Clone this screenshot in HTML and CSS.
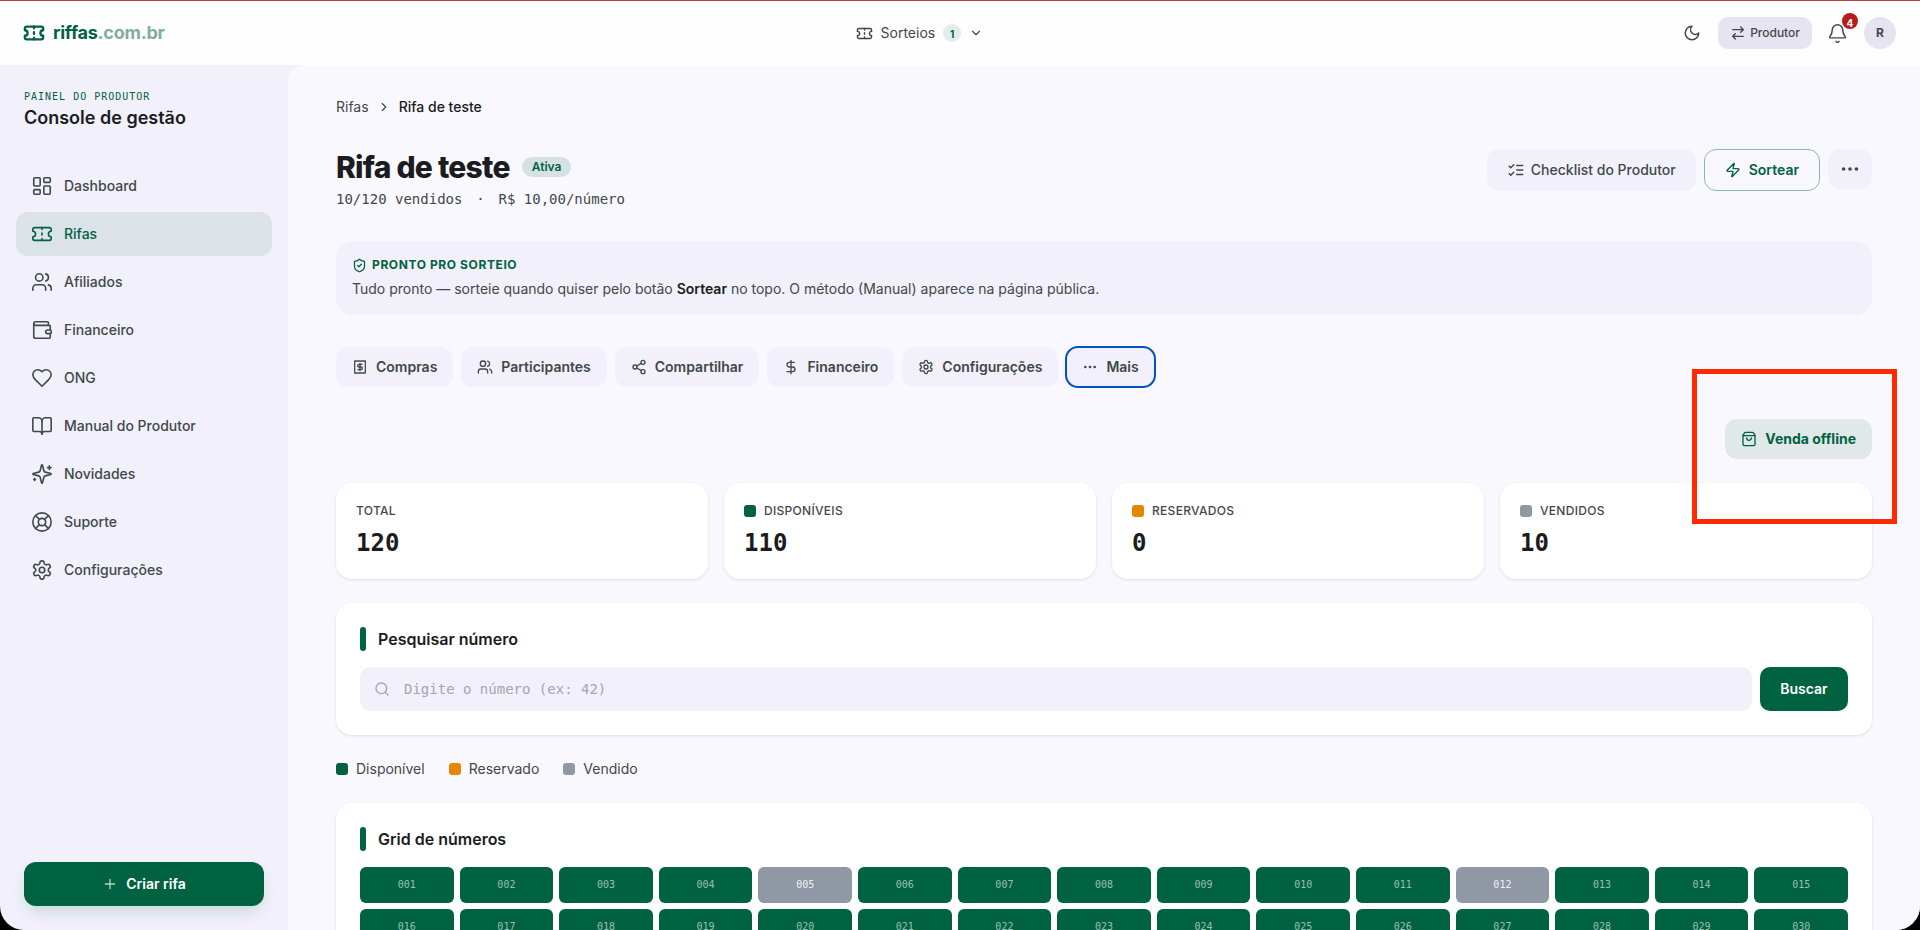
FILE: index.html
```html
<!DOCTYPE html>
<html lang="pt-BR">
<head>
<meta charset="utf-8">
<title>Rifa de teste</title>
<link rel="stylesheet" href="styles.css">
</head>
<body>
<svg class="defs" xmlns="http://www.w3.org/2000/svg">
  <symbol id="i-ticket" viewBox="0 0 24 24"><path d="M2 9a3 3 0 0 1 0 6v2a2 2 0 0 0 2 2h16a2 2 0 0 0 2-2v-2a3 3 0 0 1 0-6V7a2 2 0 0 0-2-2H4a2 2 0 0 0-2 2Z"/><path d="M12 5v2M12 11v2M12 17v2"/></symbol>
  <symbol id="i-dash" viewBox="0 0 24 24"><rect x="3" y="3" width="7" height="9" rx="1"/><rect x="14" y="3" width="7" height="5" rx="1"/><rect x="14" y="12" width="7" height="9" rx="1"/><rect x="3" y="16" width="7" height="5" rx="1"/></symbol>
  <symbol id="i-users" viewBox="0 0 24 24"><path d="M16 21v-2a4 4 0 0 0-4-4H6a4 4 0 0 0-4 4v2"/><circle cx="9" cy="7" r="4"/><path d="M22 21v-2a4 4 0 0 0-3-3.87"/><path d="M16 3.13a4 4 0 0 1 0 7.75"/></symbol>
  <symbol id="i-wallet" viewBox="0 0 24 24"><path d="M19 7V4a1 1 0 0 0-1-1H5a2 2 0 0 0 0 4h15a1 1 0 0 1 1 1v4h-3a2 2 0 0 0 0 4h3a1 1 0 0 0 1-1v-2a1 1 0 0 0-1-1"/><path d="M3 5v14a2 2 0 0 0 2 2h15a1 1 0 0 0 1-1v-4"/></symbol>
  <symbol id="i-heart" viewBox="0 0 24 24"><path d="M19 14c1.49-1.46 3-3.21 3-5.5A5.5 5.5 0 0 0 16.5 3c-1.76 0-3 .5-4.5 2-1.5-1.5-2.74-2-4.5-2A5.5 5.5 0 0 0 2 8.5c0 2.3 1.5 4.05 3 5.5l7 7Z"/></symbol>
  <symbol id="i-book" viewBox="0 0 24 24"><path d="M12 7v14"/><path d="M3 18a1 1 0 0 1-1-1V4a1 1 0 0 1 1-1h5a4 4 0 0 1 4 4 4 4 0 0 1 4-4h5a1 1 0 0 1 1 1v13a1 1 0 0 1-1 1h-6a3 3 0 0 0-3 3 3 3 0 0 0-3-3z"/></symbol>
  <symbol id="i-sparkles" viewBox="0 0 24 24"><path d="M9.937 15.5A2 2 0 0 0 8.5 14.063l-6.135-1.582a.5.5 0 0 1 0-.962L8.5 9.936A2 2 0 0 0 9.937 8.5l1.582-6.135a.5.5 0 0 1 .963 0L14.063 8.5A2 2 0 0 0 15.5 9.937l6.135 1.581a.5.5 0 0 1 0 .964L15.5 14.063a2 2 0 0 0-1.437 1.437l-1.582 6.135a.5.5 0 0 1-.963 0z"/><path d="M20 3v4M22 5h-4M4 17v2M5 18H3"/></symbol>
  <symbol id="i-buoy" viewBox="0 0 24 24"><circle cx="12" cy="12" r="10"/><path d="m4.93 4.93 4.24 4.24M14.83 9.17l4.24-4.24M14.83 14.83l4.24 4.24M9.17 14.83l-4.24 4.24"/><circle cx="12" cy="12" r="4"/></symbol>
  <symbol id="i-gear" viewBox="0 0 24 24"><path d="M12.22 2h-.44a2 2 0 0 0-2 2v.18a2 2 0 0 1-1 1.73l-.43.25a2 2 0 0 1-2 0l-.15-.08a2 2 0 0 0-2.73.73l-.22.38a2 2 0 0 0 .73 2.73l.15.1a2 2 0 0 1 1 1.72v.51a2 2 0 0 1-1 1.74l-.15.09a2 2 0 0 0-.73 2.73l.22.38a2 2 0 0 0 2.73.73l.15-.08a2 2 0 0 1 2 0l.43.25a2 2 0 0 1 1 1.73V20a2 2 0 0 0 2 2h.44a2 2 0 0 0 2-2v-.18a2 2 0 0 1 1-1.73l.43-.25a2 2 0 0 1 2 0l.15.08a2 2 0 0 0 2.73-.73l.22-.39a2 2 0 0 0-.73-2.73l-.15-.08a2 2 0 0 1-1-1.74v-.5a2 2 0 0 1 1-1.74l.15-.09a2 2 0 0 0 .73-2.73l-.22-.38a2 2 0 0 0-2.73-.73l-.15.08a2 2 0 0 1-2 0l-.43-.25a2 2 0 0 1-1-1.73V4a2 2 0 0 0-2-2z"/><circle cx="12" cy="12" r="3"/></symbol>
  <symbol id="i-moon" viewBox="0 0 24 24"><path d="M12 3a6 6 0 0 0 9 9 9 9 0 1 1-9-9Z"/></symbol>
  <symbol id="i-swap" viewBox="0 0 24 24"><path d="m16 3 4 4-4 4M20 7H4M8 21l-4-4 4-4M4 17h16"/></symbol>
  <symbol id="i-bell" viewBox="0 0 24 24"><path d="M10.268 21a2 2 0 0 0 3.464 0"/><path d="M3.262 15.326A1 1 0 0 0 4 17h16a1 1 0 0 0 .74-1.673C19.41 13.956 18 12.499 18 8A6 6 0 0 0 6 8c0 4.499-1.411 5.956-2.738 7.326"/></symbol>
  <symbol id="i-check" viewBox="0 0 24 24"><path d="m3 17 2 2 4-4M3 7l2 2 4-4M13 6h8M13 12h8M13 18h8"/></symbol>
  <symbol id="i-zap" viewBox="0 0 24 24"><path d="M4 14a1 1 0 0 1-.78-1.63l9.9-10.2a.5.5 0 0 1 .86.46l-1.92 6.02A1 1 0 0 0 13 10h7a1 1 0 0 1 .78 1.63l-9.9 10.2a.5.5 0 0 1-.86-.46l1.92-6.02A1 1 0 0 0 11 14z"/></symbol>
  <symbol id="i-dots" viewBox="0 0 24 24"><circle cx="12" cy="12" r="1"/><circle cx="19" cy="12" r="1"/><circle cx="5" cy="12" r="1"/></symbol>
  <symbol id="i-shield" viewBox="0 0 24 24"><path d="M20 13c0 5-3.5 7.5-7.66 8.95a1 1 0 0 1-.67-.01C7.5 20.5 4 18 4 13V6a1 1 0 0 1 1-1c2 0 4.5-1.2 6.24-2.72a1.17 1.17 0 0 1 1.52 0C14.51 3.81 17 5 19 5a1 1 0 0 1 1 1z"/><path d="m9 12 2 2 4-4"/></symbol>
  <symbol id="i-receipt" viewBox="0 0 24 24"><path d="M4 3h16v18H4z" stroke-dasharray="2 1.1"/><path d="M15 8h-4.500a2 2 0 0 0 0 4h3a2 2 0 0 1 0 4H9M12 6.500v11"/></symbol>
  <symbol id="i-share" viewBox="0 0 24 24"><circle cx="18" cy="5" r="3"/><circle cx="6" cy="12" r="3"/><circle cx="18" cy="19" r="3"/><path d="m8.590 13.510 6.830 3.980M15.410 6.510l-6.820 3.980"/></symbol>
  <symbol id="i-dollar" viewBox="0 0 24 24"><path d="M12 2v20M17 5H9.500a3.500 3.500 0 0 0 0 7h5a3.500 3.500 0 0 1 0 7H6"/></symbol>
  <symbol id="i-bag" viewBox="0 0 24 24"><path d="M15.500 10.500a3.500 3.500 0 0 1-7 0"/><path d="M3.500 7h17"/><path d="M3.400 5.467a2 2 0 0 0-.4 1.200V20a2 2 0 0 0 2 2h14a2 2 0 0 0 2-2V6.667a2 2 0 0 0-.4-1.200l-2-2.667A2 2 0 0 0 17 2H7a2 2 0 0 0-1.600.8z"/></symbol>
  <symbol id="i-search" viewBox="0 0 24 24"><path d="m21 21-4.340-4.340"/><circle cx="11" cy="11" r="8"/></symbol>
  <symbol id="i-plus" viewBox="0 0 24 24"><path d="M5 12h14M12 5v14"/></symbol>
  <symbol id="i-down" viewBox="0 0 24 24"><path d="m6 9 6 6 6-6"/></symbol>
  <symbol id="i-right" viewBox="0 0 24 24"><path d="m9 18 6-6-6-6"/></symbol>
</svg>

<div class="app">
  <header class="topbar">
    <a class="logo"><svg class="ic ic-logo"><use href="#i-ticket"/></svg><span class="logo-text">riffas<span class="logo-dim">.com.br</span></span></a>
    <button class="raffles"><svg class="ic ic-17"><use href="#i-ticket"/></svg><span>Sorteios</span><span class="count">1</span><svg class="ic ic-14"><use href="#i-down"/></svg></button>
    <div class="top-actions">
      <button class="icon-btn"><svg class="ic ic-18"><use href="#i-moon"/></svg></button>
      <button class="role"><svg class="ic ic-16"><use href="#i-swap"/></svg><span>Produtor</span></button>
      <button class="icon-btn bell"><svg class="ic ic-21"><use href="#i-bell"/></svg><span class="notif">4</span></button>
      <div class="avatar">R</div>
    </div>
  </header>

  <div class="body">
    <aside class="sidebar">
      <div class="side-head">
        <div class="eyebrow">PAINEL DO PRODUTOR</div>
        <div class="side-title">Console de gestão</div>
      </div>
      <nav class="nav">
        <a class="nav-item"><svg class="ic ic-nav"><use href="#i-dash"/></svg>Dashboard</a>
        <a class="nav-item active"><svg class="ic ic-nav"><use href="#i-ticket"/></svg>Rifas</a>
        <a class="nav-item"><svg class="ic ic-nav"><use href="#i-users"/></svg>Afiliados</a>
        <a class="nav-item"><svg class="ic ic-nav"><use href="#i-wallet"/></svg>Financeiro</a>
        <a class="nav-item"><svg class="ic ic-nav"><use href="#i-heart"/></svg>ONG</a>
        <a class="nav-item"><svg class="ic ic-nav"><use href="#i-book"/></svg>Manual do Produtor</a>
        <a class="nav-item"><svg class="ic ic-nav"><use href="#i-sparkles"/></svg>Novidades</a>
        <a class="nav-item"><svg class="ic ic-nav"><use href="#i-buoy"/></svg>Suporte</a>
        <a class="nav-item"><svg class="ic ic-nav"><use href="#i-gear"/></svg>Configurações</a>
      </nav>
      <button class="create"><svg class="ic ic-16 dim"><use href="#i-plus"/></svg>Criar rifa</button>
    </aside>

    <main class="main">
      <div class="crumbs"><span>Rifas</span><svg class="ic ic-14"><use href="#i-right"/></svg><span class="crumb-cur">Rifa de teste</span></div>

      <section class="page-head">
        <div>
          <div class="title-row"><h1>Rifa de teste</h1><span class="pill">Ativa</span></div>
          <p class="sub">10/120 vendidos<span class="sep"> · </span>R$ 10,00/número</p>
        </div>
        <div class="head-actions">
          <button class="btn btn-soft"><svg class="ic ic-18"><use href="#i-check"/></svg>Checklist do Produtor</button>
          <button class="btn btn-outline"><svg class="ic ic-16"><use href="#i-zap"/></svg>Sortear</button>
          <button class="btn-more"><svg class="ic ic-22"><use href="#i-dots"/></svg></button>
        </div>
      </section>

      <section class="notice">
        <div class="notice-label"><svg class="ic ic-15"><use href="#i-shield"/></svg>PRONTO PRO SORTEIO</div>
        <p>Tudo pronto — sorteie quando quiser pelo botão <strong>Sortear</strong> no topo. O método (Manual) aparece na página pública.</p>
      </section>

      <nav class="tabs">
        <a class="tab"><svg class="ic ic-16"><use href="#i-receipt"/></svg>Compras</a>
        <a class="tab"><svg class="ic ic-16"><use href="#i-users"/></svg>Participantes</a>
        <a class="tab"><svg class="ic ic-16"><use href="#i-share"/></svg>Compartilhar</a>
        <a class="tab"><svg class="ic ic-16"><use href="#i-dollar"/></svg>Financeiro</a>
        <a class="tab"><svg class="ic ic-16"><use href="#i-gear"/></svg>Configurações</a>
        <a class="tab tab-focus"><svg class="ic ic-16"><use href="#i-dots"/></svg>Mais</a>
      </nav>

      <div class="offline-row">
        <button class="offline"><svg class="ic ic-16"><use href="#i-bag"/></svg>Venda offline</button>
      </div>

      <section class="stats">
        <div class="stat"><div class="stat-label">TOTAL</div><div class="stat-value">120</div></div>
        <div class="stat"><div class="stat-label"><i class="sq sq-green"></i>DISPONÍVEIS</div><div class="stat-value">110</div></div>
        <div class="stat"><div class="stat-label"><i class="sq sq-orange"></i>RESERVADOS</div><div class="stat-value">0</div></div>
        <div class="stat"><div class="stat-label"><i class="sq sq-gray"></i>VENDIDOS</div><div class="stat-value">10</div></div>
      </section>

      <section class="card">
        <h2 class="card-title">Pesquisar número</h2>
        <div class="search-row">
          <label class="search"><svg class="ic ic-16"><use href="#i-search"/></svg><input placeholder="Digite o número (ex: 42)"></label>
          <button class="search-btn">Buscar</button>
        </div>
      </section>

      <div class="legend">
        <span class="legend-item"><i class="sq sq-green"></i>Disponível</span>
        <span class="legend-item"><i class="sq sq-orange"></i>Reservado</span>
        <span class="legend-item"><i class="sq sq-gray"></i>Vendido</span>
      </div>

      <section class="card">
        <h2 class="card-title">Grid de números</h2>
        <div class="grid">
          <span class="n">001</span><span class="n">002</span><span class="n">003</span><span class="n">004</span><span class="n sold">005</span><span class="n">006</span><span class="n">007</span><span class="n">008</span><span class="n">009</span><span class="n">010</span><span class="n">011</span><span class="n sold">012</span><span class="n">013</span><span class="n">014</span><span class="n">015</span>
          <span class="n">016</span><span class="n">017</span><span class="n">018</span><span class="n">019</span><span class="n">020</span><span class="n">021</span><span class="n">022</span><span class="n">023</span><span class="n">024</span><span class="n">025</span><span class="n">026</span><span class="n">027</span><span class="n">028</span><span class="n">029</span><span class="n">030</span>
        </div>
      </section>
    </main>
  </div>
  <div class="annotation"></div>
</div>
</body>
</html>
```

FILE: styles.css
```css
* { box-sizing: border-box; }
html, body { margin: 0; height: 100%; overflow: hidden; background: #000; }
body { font-family: Inter, "Noto Sans", sans-serif; color: #1a1c20; font-size: 14px; line-height: 20px; }
button, input { font: inherit; border: 0; background: none; color: inherit; padding: 0; }
h1, h2, p { margin: 0; }
.defs { display: none; }
.ic { fill: none; stroke: currentColor; stroke-width: 2; stroke-linecap: round; stroke-linejoin: round; flex: none; display: block; }
.ic-14 { width: 14px; height: 14px; }
.ic-15 { width: 15px; height: 15px; }
.ic-16 { width: 16px; height: 16px; }
.ic-17 { width: 17px; height: 17px; }
.ic-18 { width: 18px; height: 18px; }
.ic-21 { width: 21px; height: 21px; stroke-width: 1.7; }
.ic-22 { width: 22px; height: 22px; }
.ic-nav { width: 22px; height: 22px; stroke-width: 1.75; }
.ic-logo { width: 22px; height: 22px; margin-left: -1px; stroke-width: 2.5; color: #006241; }
.dim { opacity: .7; }

.app { position: relative; height: 930px; display: flex; flex-direction: column; overflow: hidden; background: #f1f0fb; border-radius: 0 0 24px 24px; }
.topbar { height: 65px; flex: none; display: flex; align-items: center; justify-content: space-between; padding: 0 24px; background: #fefdff; border-top: 1px solid #c0403c; }
.logo { display: flex; align-items: center; gap: 8px; }
.logo-text { font-size: 18px; line-height: 28px; font-weight: 700; letter-spacing: -.25px; color: #006241; }
.logo-dim { opacity: .5; }
.raffles { display: flex; align-items: center; height: 36px; padding: 0 12px; gap: 8px; color: #3f4947; }
.count { width: 18px; height: 18px; border-radius: 50%; background: #e2eceb; color: #006241; font-size: 10px; font-weight: 700; display: grid; place-items: center; }
.top-actions { display: flex; align-items: center; gap: 8px; }
.icon-btn { position: relative; width: 36px; height: 36px; display: grid; place-items: center; color: #3f4947; }
.role { height: 32px; display: flex; align-items: center; gap: 4px; padding: 0 12px; border-radius: 10px; background: #e5e4f0; color: #3f4947; font-size: 12px; font-weight: 500; }
.notif { position: absolute; top: -2px; right: -2px; width: 16px; height: 16px; border-radius: 50%; background: #ba1a1a; color: #fff; font-size: 10px; font-weight: 700; display: grid; place-items: center; }
.avatar { width: 32px; height: 32px; border-radius: 50%; background: #e5e4f0; color: #3f4947; font-size: 12px; font-weight: 700; display: grid; place-items: center; }

.body { flex: 1; min-height: 0; display: flex; }
.sidebar { width: 288px; flex: none; display: flex; flex-direction: column; padding: 24px 16px; }
.side-head { padding: 0 8px; }
.eyebrow { font-family: "DejaVu Sans Mono", "Liberation Mono", monospace; font-size: 10px; line-height: 15px; letter-spacing: 1px; color: #006241; }
.side-title { font-size: 18px; font-weight: 600; line-height: 28px; color: #1a1c20; }
.nav { display: flex; flex-direction: column; gap: 4px; margin-top: 32px; flex: 1; }
.nav-item { height: 44px; display: flex; align-items: center; gap: 11px; padding: 0 15px; border-radius: 12px; color: #3f4947; font-weight: 500; }
.nav-item.active { background: #dbe2e8; color: #006241; }
.create { height: 44px; margin: 0 8px; display: flex; align-items: center; justify-content: center; gap: 8px; border-radius: 12px; background: #006241; color: #fff; font-weight: 600; box-shadow: 0 8px 16px -4px rgba(0, 98, 65, .2); }

.main { flex: 1; min-width: 0; overflow: hidden; padding: 32px 48px 0; background: #faf8ff; border-radius: 16px 0 0 0; }
.crumbs { display: flex; align-items: center; gap: 8px; color: #3f4947; }
.crumb-cur { color: #1a1c20; font-weight: 500; }
.page-head { display: flex; justify-content: space-between; align-items: flex-start; margin-top: 32px; }
.title-row { display: flex; align-items: center; gap: 12px; }
h1 { font-size: 30px; line-height: 36px; font-weight: 800; letter-spacing: -.75px; }
.pill { padding: 0 10px; height: 20px; display: flex; align-items: center; border-radius: 10px; background: #d5e2e1; color: #006241; font-size: 12px; font-weight: 600; }
.sub { margin-top: 4px; font-family: "DejaVu Sans Mono", "Liberation Mono", monospace; font-size: 14px; color: #3f4947; }
.sep { margin: 0 5.4px; }
.head-actions { display: flex; align-items: flex-start; gap: 8px; }
.btn { height: 42px; display: flex; align-items: center; padding: 0 20px; border-radius: 12px; font-weight: 500; }
.btn-soft { gap: 6px; background: #f1f0fb; color: #3f4947; }
.btn-outline { gap: 8px; border: 1px solid #8fb5aa; color: #006241; font-weight: 600; background: transparent; }
.btn-more { width: 44px; height: 40px; display: grid; place-items: center; border-radius: 12px; background: #f1f0fb; color: #3f4947; }

.notice { margin-top: 32px; padding: 16px 16px 14px; border-radius: 16px; background: #f1f0fb; }
.notice-label { display: flex; align-items: center; gap: 5px; font-size: 12px; line-height: 16px; font-weight: 700; letter-spacing: .6px; color: #006241; }
.notice p { margin-top: 4px; line-height: 24px; color: #3f4947; }
.notice strong { color: #1a1c20; font-weight: 600; }

.tabs { display: flex; gap: 8px; margin-top: 32px; }
.tab { height: 40px; display: flex; align-items: center; gap: 8px; padding: 0 16px; border-radius: 12px; background: #f1f0fb; color: #3f4947; font-weight: 600; }
.tab-focus { outline: 2px solid #0052c4; outline-offset: -1px; }

.offline-row { display: flex; justify-content: flex-end; margin-top: 32px; }
.offline { height: 40px; display: flex; align-items: center; gap: 8px; padding: 0 16px; border-radius: 12px; background: #e0e8ea; color: #006241; font-weight: 700; }

.stats { display: grid; grid-template-columns: repeat(4, 1fr); gap: 16px; margin-top: 24px; }
.stat { height: 96px; padding: 20px; border-radius: 16px; background: #fff; box-shadow: 0 1px 3px rgba(26, 28, 32, .12); }
.stat-label { display: flex; align-items: center; gap: 8px; font-size: 12px; line-height: 16px; font-weight: 500; letter-spacing: .3px; color: #3f4947; }
.stat-value { margin-top: 8px; font-family: "DejaVu Sans Mono", "Liberation Mono", monospace; font-size: 24px; line-height: 32px; font-weight: 700; color: #1a1c20; }
.sq { width: 12px; height: 12px; border-radius: 3px; flex: none; display: block; }
.sq-green { background: #006241; }
.sq-orange { background: #e68500; }
.sq-gray { background: #9097a5; }

.card { margin-top: 24px; padding: 24px; border-radius: 16px; background: #fff; box-shadow: 0 1px 3px rgba(26, 28, 32, .12); }
.card-title { display: flex; align-items: center; gap: 12px; font-size: 16px; line-height: 24px; font-weight: 600; color: #1a1c20; }
.card-title::before { content: ""; width: 6px; height: 24px; border-radius: 3px; background: #006241; }
.search-row { display: flex; gap: 8px; margin-top: 16px; }
.search { flex: 1; height: 44px; display: flex; align-items: center; gap: 14px; padding: 0 14px; border-radius: 10px; background: #f1f0fb; color: #a3a6ad; }
.search input { flex: 1; outline: 0; font-family: "DejaVu Sans Mono", "Liberation Mono", monospace; font-size: 14px; }
.search input::placeholder { color: #a3a6ad; opacity: 1; }
.search-btn { width: 88px; height: 44px; border-radius: 10px; background: #006241; color: #fff; font-weight: 600; }

.legend { display: flex; gap: 24px; margin-top: 24px; color: #3f4947; }
.legend-item { display: flex; align-items: center; gap: 8px; }

.grid { display: grid; grid-template-columns: repeat(15, 1fr); gap: 6px; margin-top: 16px; }
.n { height: 36px; display: grid; place-items: center; border-radius: 6px; background: #006241; color: rgba(255, 255, 255, .6); font-family: "DejaVu Sans Mono", "Liberation Mono", monospace; font-size: 10px; }
.n.sold { background: #9097a5; color: rgba(255, 255, 255, .9); }

.annotation { position: absolute; left: 1692px; top: 369px; width: 205px; height: 155px; border: 5px solid #ff2a00; pointer-events: none; }
```
